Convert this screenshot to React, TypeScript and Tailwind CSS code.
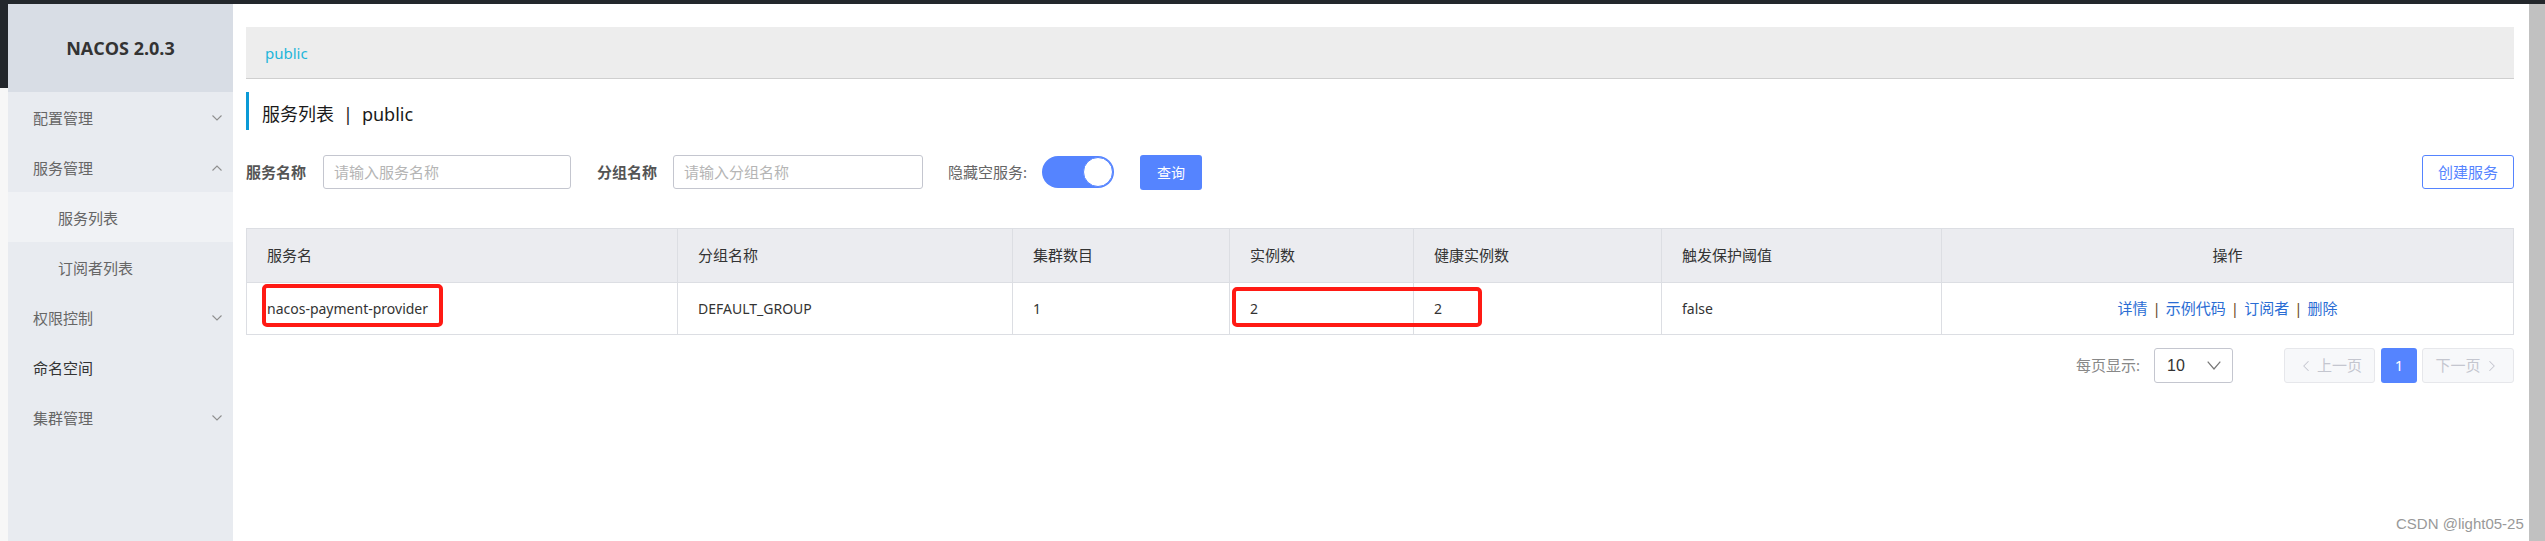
import { ChevronLeft, ChevronRight } from 'lucide-react';

const Chevron = ({ up = false }: { up?: boolean }) => (
    <svg width="10" height="6" viewBox="0 0 10 6" className="shrink-0">
        <path
            d={up ? 'M0.5 5.5 L5 1 L9.5 5.5' : 'M0.5 0.5 L5 5 L9.5 0.5'}
            fill="none"
            stroke="#8f8f8f"
            strokeWidth="1.1"
        />
    </svg>
);

const menu = [
    { label: '配置管理', chevron: 'down' },
    { label: '服务管理', chevron: 'up' },
    { label: '服务列表', sub: true, active: true },
    { label: '订阅者列表', sub: true },
    { label: '权限控制', chevron: 'down' },
    { label: '命名空间', dark: true },
    { label: '集群管理', chevron: 'down' },
];

const columns = [
    { title: '服务名', width: 431 },
    { title: '分组名称', width: 335 },
    { title: '集群数目', width: 217 },
    { title: '实例数', width: 184 },
    { title: '健康实例数', width: 248 },
    { title: '触发保护阈值', width: 280 },
    { title: '操作', width: 572, center: true },
];

const row = ['nacos-payment-provider', 'DEFAULT_GROUP', '1', '2', '2', 'false'];

const Sidebar = () => (
    <aside className="w-[225px] shrink-0 flex flex-col bg-[#e8ebf0]">
        <div className="h-[88px] bg-[#d8dde5] flex items-center justify-center">
            <span className="text-[18px] font-bold text-[#333] font-['Open_Sans',sans-serif]">NACOS 2.0.3</span>
        </div>
        {menu.map((m, i) => (
            <div
                key={i}
                className={`h-[50px] pt-[2px] flex items-center justify-between pr-[11px] text-[15px] ${m.sub ? 'pl-[50px]' : 'pl-[25px]'} ${m.active ? 'bg-[#f0f2f5]' : ''} ${m.dark ? 'text-[#333]' : 'text-[#666]'}`}
            >
                <span>{m.label}</span>
                {m.chevron && <Chevron up={m.chevron === 'up'} />}
            </div>
        ))}
    </aside>
);

const SearchBar = () => (
    <div className="mt-[25px] h-[34px] flex items-center text-[15px]">
        <span className="font-bold text-[#555]">服务名称</span>
        <div className="ml-[17px] w-[248px] h-[34px] border border-[#c4c6cf] rounded-[3px] flex items-center pl-[10px] text-[#b5b5b5]">
            请输入服务名称
        </div>
        <span className="ml-[26px] font-bold text-[#555]">分组名称</span>
        <div className="ml-[16px] w-[250px] h-[34px] border border-[#c4c6cf] rounded-[3px] flex items-center pl-[10px] text-[#b5b5b5]">
            请输入分组名称
        </div>
        <span className="ml-[25px] text-[#666]">隐藏空服务:</span>
        <div className="ml-[15px] w-[72px] h-[32px] rounded-full bg-[#5584ff] flex items-center justify-end pr-[1px]">
            <div className="w-[30px] h-[30px] rounded-full bg-white border border-[#5584ff]" />
        </div>
        <button className="ml-[26px] w-[62px] h-[35px] rounded-[3px] bg-[#5584ff] text-white text-[14px]">查询</button>
        <div className="flex-1" />
        <button className="w-[92px] h-[34px] rounded-[3px] border border-[#5584ff] text-[#5584ff] text-[15px]">创建服务</button>
    </div>
);

const Table = () => (
    <table className="mt-[39px] w-full border-collapse table-fixed text-[15px] text-[#333]">
        <colgroup>
            {columns.map((c, i) => (
                <col key={i} style={{ width: c.width }} />
            ))}
        </colgroup>
        <thead>
            <tr className="h-[54px] bg-[#ebecf0]">
                {columns.map((c, i) => (
                    <th
                        key={i}
                        className={`border border-[#dcdee3] font-normal ${c.center ? 'text-center' : 'text-left pl-[20px]'}`}
                    >
                        {c.title}
                    </th>
                ))}
            </tr>
        </thead>
        <tbody>
            <tr className="h-[52px]">
                {row.map((v, i) => (
                    <td key={i} className="border border-[#dcdee3] pl-[20px] text-[14px]">
                        {v}
                    </td>
                ))}
                <td className="border border-[#dcdee3] text-center text-[15px] text-[#2a6dd4]">
                    详情<span className="mx-[5px] text-[#6b4a2a]">|</span>示例代码
                    <span className="mx-[5px] text-[#6b4a2a]">|</span>订阅者
                    <span className="mx-[5px] text-[#6b4a2a]">|</span>删除
                </td>
            </tr>
        </tbody>
    </table>
);

const Pagination = () => (
    <div className="mt-[13px] h-[35px] flex items-center justify-end text-[15px]">
        <span className="text-[#888]">每页显示:</span>
        <div className="ml-[14px] w-[79px] h-[35px] border border-[#c4c6cf] rounded-[3px] flex items-center justify-between pl-[12px] pr-[11px] text-[#333] font-['Liberation_Sans',sans-serif] text-[16px]">
            <span>10</span>
            <svg width="14" height="9" viewBox="0 0 14 9">
                <path d="M0.7 0.7 L7 8 L13.3 0.7" fill="none" stroke="#777" strokeWidth="1.2" />
            </svg>
        </div>
        <div className="ml-[51px] w-[91px] h-[35px] border border-[#e6e7eb] bg-[#f7f8fa] rounded-[3px] flex items-center justify-center gap-[2px] text-[#c4c6cf]">
            <ChevronLeft size={18} strokeWidth={1.4} />
            <span>上一页</span>
        </div>
        <div className="ml-[6px] w-[36px] h-[35px] rounded-[3px] bg-[#5584ff] text-white flex items-center justify-center">1</div>
        <div className="ml-[5px] w-[92px] h-[35px] border border-[#e6e7eb] bg-[#f7f8fa] rounded-[3px] flex items-center justify-center gap-[2px] text-[#c4c6cf]">
            <span>下一页</span>
            <ChevronRight size={18} strokeWidth={1.4} />
        </div>
    </div>
);

export default function App() {
    return (
        <div className="relative w-[2545px] h-[541px] overflow-hidden bg-white flex flex-col font-['Noto_Sans','Noto_Sans_CJK_SC',sans-serif]">
            <div className="h-[4px] bg-[#23272c] shrink-0" />
            <div className="flex flex-1 min-h-0">
                {/* window edge behind */}
                <div className="w-[8px] shrink-0 flex flex-col">
                    <div className="h-[84px] bg-[#23272c]" />
                    <div className="flex-1 bg-[#f7f7f7]" />
                </div>
                <Sidebar />
                <main className="flex-1 pl-[13px] pr-[15px] pt-[23px]">
                    <div className="h-[52px] bg-[#ededed] border-b border-[#cfcfcf] flex items-center pl-[19px] pt-[2px] text-[15px] text-[#1fb6da]">
                        public
                    </div>
                    <div className="mt-[13px] h-[38px] border-l-[3px] border-[#0b9ad6] pl-[13px] pt-[6px] flex items-center text-[18px] text-[#1a1a1a]">
                        服务列表<span className="mx-[9px]">|</span>public
                    </div>
                    <SearchBar />
                    <Table />
                    <Pagination />
                </main>
                <div className="w-[17px] shrink-0 bg-[#c1c1c1]" />
            </div>

            {/* annotation boxes */}
            <div className="absolute left-[262px] top-[284px] w-[181px] h-[43px] border-[4px] border-[#ff1a14] rounded-[5px]" />
            <div className="absolute left-[1232px] top-[287px] w-[250px] h-[40px] border-[4px] border-[#ff1a14] rounded-[5px]" />

            <div className="absolute left-[2396px] top-[513px] text-[15px] text-[#999] font-['Liberation_Sans',sans-serif]">
                CSDN @light05-25
            </div>
        </div>
    );
}
